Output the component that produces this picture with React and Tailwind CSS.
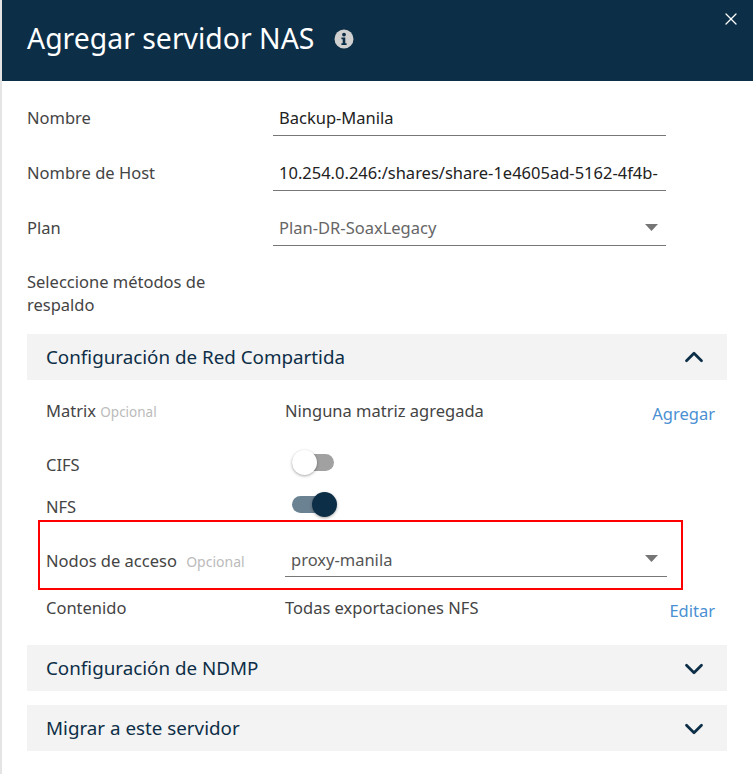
import React from 'react';
import { ChevronDown, ChevronUp, X } from 'lucide-react';

const font = { fontFamily: '"Noto Sans", "Open Sans", sans-serif' };

const Caret = () => (
  <svg width="13" height="7" viewBox="0 0 13 7" className="shrink-0">
    <path d="M0 0h13L6.5 7z" fill="#757575" />
  </svg>
);

const InfoIcon = () => (
  <svg width="20" height="20" viewBox="0 0 20 20" className="ml-[20px] mt-[3px]">
    <circle cx="10" cy="10" r="9.5" fill="#d0d0d0" />
    <circle cx="10" cy="5.6" r="1.9" fill="#0d2e47" />
    <path d="M7.4 8.6h3.9v5.6h1.3v1.7H7.4v-1.7h1.3v-3.9H7.4z" fill="#0d2e47" />
  </svg>
);

const FormRow = ({ label, value, muted, select, className = '' }) => (
  <div className={`flex items-start h-[55px] ${className}`}>
    <div className="w-[246px] pt-[6px] text-[#444]">{label}</div>
    <div className="w-[393px] h-[36px] border-b border-[#777] pl-[6px] flex items-center justify-between overflow-hidden">
      <span className={`whitespace-nowrap ${muted ? 'text-[#666]' : 'text-[#222]'}`}>{value}</span>
      {select && <span className="pr-[8px] bg-white"><Caret /></span>}
    </div>
  </div>
);

const SectionHeader = ({ title, open, className = '' }) => (
  <div className={`h-[46px] bg-[#f3f3f3] flex items-center justify-between pl-[19px] pr-[18px] ${className}`}>
    <span className="text-[18.8px] text-[#0d2e47]">{title}</span>
    {open
      ? <ChevronUp size={30} strokeWidth={2.2} color="#0d2e47" />
      : <ChevronDown size={30} strokeWidth={2.2} color="#0d2e47" className="mt-[2px]" />}
  </div>
);

const Toggle = ({ on }) => (
  <div className="relative w-[46px] h-[26px] ml-[5px] mt-[-2px]">
    <div className={`absolute top-[4px] left-[1px] w-[42px] h-[17px] rounded-full ${on ? 'bg-[#6b8292]' : 'bg-[#a1a1a1]'}`} />
    <div className={`absolute top-0 w-[25px] h-[25px] rounded-full shadow-[0_1px_3px_rgba(0,0,0,0.35)] ${on ? 'left-[21px] bg-[#0d2e47]' : 'left-[1px] bg-white'}`} />
  </div>
);

export default function App() {
  return (
    <div className="w-[753px] h-[774px] bg-white border-l-2 border-[#e4e4e4] overflow-hidden text-[16.5px] leading-[23px]" style={font}>
      <div className="relative h-[81px] bg-[#0d2e47] flex items-center pl-[25px] pb-[6px]">
        <h1 className="text-[28.4px] leading-[36px] text-white">Agregar servidor NAS</h1>
        <InfoIcon />
        <X size={20} strokeWidth={1.5} color="#fff" className="absolute top-[9px] right-[12px]" />
      </div>

      <div className="pl-[25px] pr-[26px] pt-[19px]">
        <FormRow label="Nombre" value="Backup-Manila" />
        <FormRow label="Nombre de Host" value="10.254.0.246:/shares/share-1e4605ad-5162-4f4b-" />
        <FormRow label="Plan" value="Plan-DR-SoaxLegacy" muted select />

        <div className="w-[200px] text-[#444] mt-[5px]">Seleccione métodos de respaldo</div>

        <SectionHeader title="Configuración de Red Compartida" open className="mt-[18px]" />

        <div className="pl-[19px] pt-[19px] pr-[12px] text-[#444]">
          <div className="flex items-start h-[44px]">
            <div className="w-[239px]">Matrix <span className="text-[13.5px] text-[#bbb]">Opcional</span></div>
            <div className="flex-1">Ninguna matriz agregada</div>
            <a className="text-[#4a90d2] mt-[3px]">Agregar</a>
          </div>
          <div className="flex items-center h-[42px]">
            <div className="w-[240px]">CIFS</div>
            <Toggle />
          </div>
          <div className="flex items-center h-[42px]">
            <div className="w-[240px]">NFS</div>
            <Toggle on />
          </div>
        </div>

        <div className="ml-[11px] w-[645px] h-[70px] border-2 border-[#f00] mt-[-7px] pl-[6px] pt-[15px] flex items-start text-[#444]">
          <div className="w-[240px] pt-[12px] whitespace-nowrap">Nodos de acceso <span className="text-[14px] text-[#bbb] ml-[5px]">Opcional</span></div>
          <div className="w-[382px] h-[40px] border-b border-[#777] pl-[6px] flex items-center justify-between ml-[-1px] pt-[6px]">
            <span className="text-[#555]">proxy-manila</span>
            <span className="pr-[9px] pb-[2px]"><Caret /></span>
          </div>
        </div>

        <div className="flex items-start pl-[19px] pr-[12px] pt-[6px] text-[#444]">
          <div className="w-[239px]">Contenido</div>
          <div className="flex-1">Todas exportaciones NFS</div>
          <a className="text-[#4a90d2] mt-[3px]">Editar</a>
        </div>

        <SectionHeader title="Configuración de NDMP" className="mt-[23px]" />
        <SectionHeader title="Migrar a este servidor" className="mt-[14px]" />
      </div>
    </div>
  );
}
